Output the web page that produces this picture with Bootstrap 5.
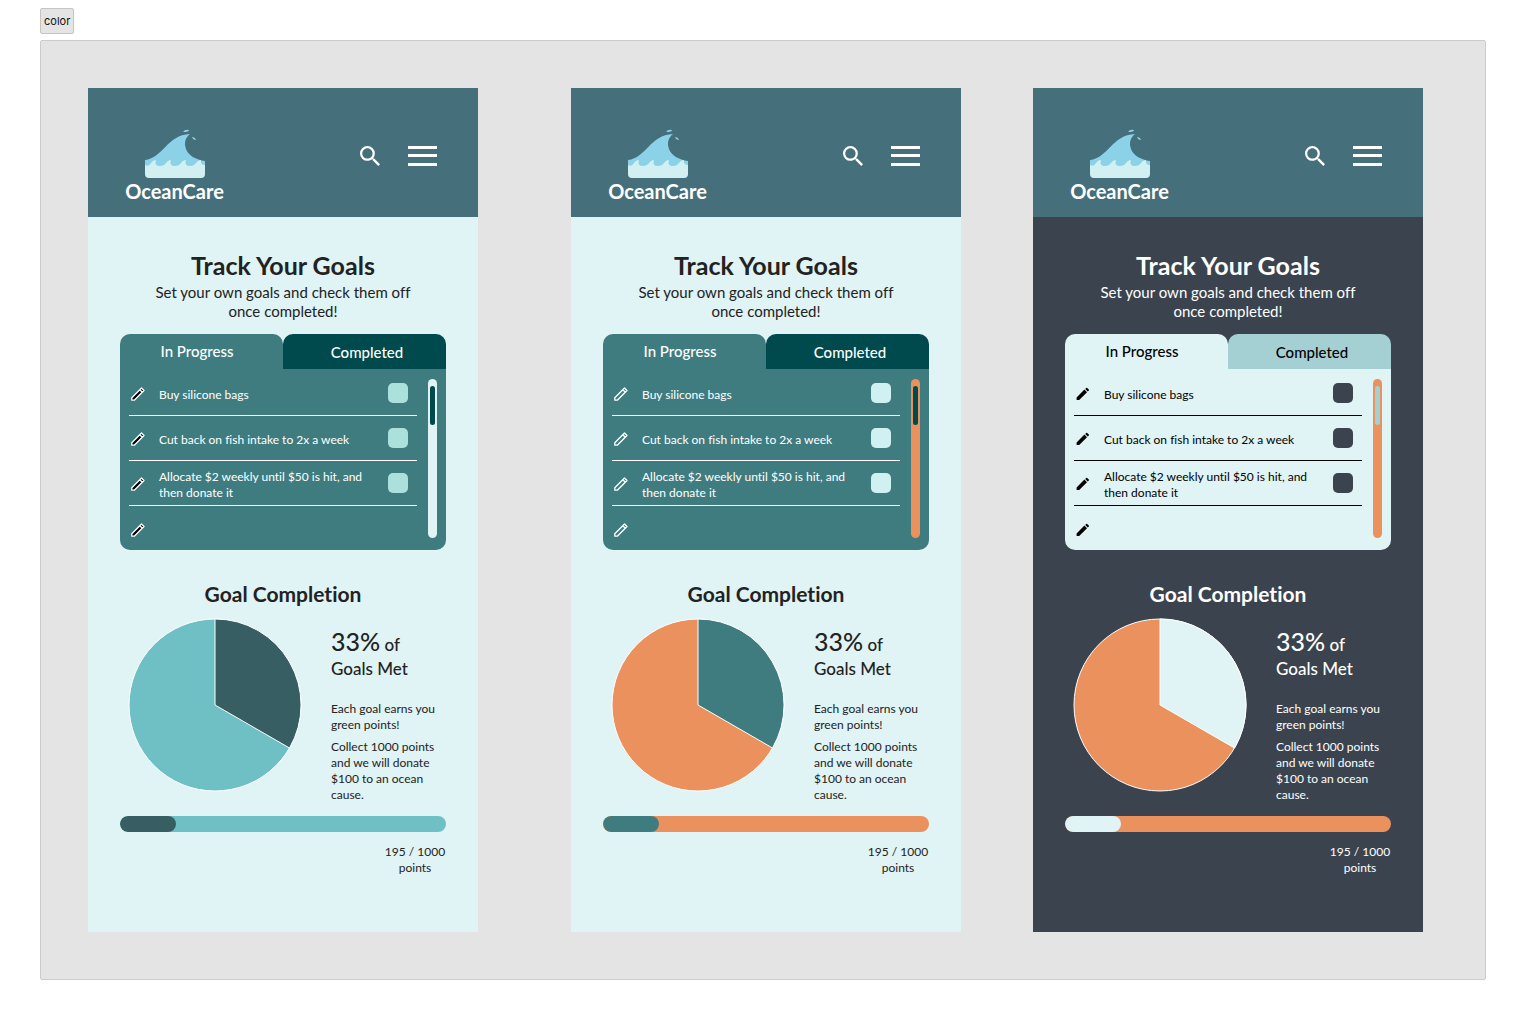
<!DOCTYPE html>
<html lang="en">
<head>
<meta charset="utf-8">
<meta name="viewport" content="width=device-width, initial-scale=1">
<title>OceanCare – color</title>
<link href="https://cdn.jsdelivr.net/npm/bootstrap@5.3.0/dist/css/bootstrap.min.css" rel="stylesheet">
<style>
body{font-family:Lato,"Open Sans",sans-serif;font-variant-ligatures:no-common-ligatures;color:#222;background:#fff;padding:8px 40px 40px}
.chip{font:11px/24px Inter,"Liberation Sans",sans-serif;background:#e4e4e4;border:1px solid #c4c4c4;border-radius:2px;padding:0 3px;color:#111}
.board{background:#e4e4e4;border:1px solid #ccc;border-radius:2px;padding:47px;margin-top:6px;gap:72px}
.phone{width:390px;padding-bottom:56px;background:var(--page);color:var(--ink)}
.phone:first-child{margin-right:21px}
.theme-sea{--page:#e0f3f5;--ink:#222;--panel:#3f7c80;--tab:#00494d;--on:#fff;--check:#abe0dc;--track:#e0f3f5;--thumb:#00494d;--rest:#6fc0c4;--part:#375e62}
.theme-coral{--page:#e0f3f5;--ink:#222;--panel:#3f7c80;--tab:#00494d;--on:#fff;--check:#d0f0f2;--track:#eb915e;--thumb:#00494d;--rest:#eb915e;--part:#3f7c80}
.theme-night{--page:#3b444e;--ink:#fff;--panel:#e0f3f5;--tab:#a4d0d3;--on:#000;--check:#3b444e;--track:#eb915e;--thumb:#a4d0d3;--rest:#eb915e;--part:#e0f3f5}
.top{background:#456f7b;color:#fff;height:129px;padding:41px 41px 0 36px}
.brand{font-size:20px;font-weight:700;line-height:24px;min-width:101px;color:#fff}
.icon-btn{background:none;border:0;padding:0;color:inherit;line-height:0}
.tools{gap:28px;padding-top:17px}
.content{padding:32px 32px 0}
.title{font-size:25px;font-weight:700;line-height:32px;margin:0}
.lede{font-size:15px;line-height:19px;margin:2px 32px 13px}
.panel{background:var(--panel);color:var(--on);border-radius:10px;height:216px}
.tabs{height:35px;background:var(--page)}
.tab-btn{border:0;background:var(--panel);color:var(--on);font-size:15px;font-weight:500;border-radius:10px 10px 0 0;padding:0 9px 0 0}
.tab-btn.rear{background:var(--tab);padding:2px 0 0 5px}
.goals{padding:2px 9px 0;gap:11px}
.goal{height:45px;border-bottom:1px solid var(--on);padding-right:9px}
.goal:last-child{border:0}
.goal .icon-btn{padding-top:2px}
.goal label{font-size:12px;line-height:16px;padding:4px 16px 0 12px}
.goal input{appearance:none;flex:none;width:20px;height:20px;border-radius:5px;background:var(--check);margin:0}
.track{flex:none;width:9px;height:159px;border-radius:5px;background:var(--track);padding:7px 2px;margin-top:8px}
.thumb{height:39px;border-radius:3px;background:var(--thumb)}
.subtitle{font-size:21px;font-weight:700;line-height:28px;margin:30px 0 10px}
.result{gap:29px;padding-left:8px}
.score{font-size:17px;font-weight:500;line-height:24px;margin:9px 0 20px}
.score span{font-size:25px;line-height:28px}
.hint{font-size:12px;line-height:16px;margin:0 0 6px}
.points-bar{height:16px;border-radius:8px;background:var(--rest);margin:7px 0 12px}
.points-bar .progress-bar{background:var(--part);border-radius:8px}
.points{font-size:12px;line-height:16px;width:62px}
</style>
</head>
<body>
<svg width="0" height="0" class="position-absolute" aria-hidden="true">
<symbol id="wave" viewBox="0 0 60 50">
<path fill="#8bd2e9" d="M0 31C18 29 22 6 45 5C40 9 39 14 41 20C43 26 51 31 60 32V40H0Z"/>
<path fill="#8bd2e9" d="M38 3Q40 0 44 1Q44 3 38 3ZM47 8Q50 8 51 11Q48 11 47 8Z"/>
<path fill="#d2f0f1" d="M0 36Q4 38 6 34Q8 31 11 31Q9 37 15 37Q19 37 21 34Q23 31 26 31Q24 37 30 37Q34 37 36 34Q38 31 41 31Q39 37 45 37Q49 37 51 34Q53 31 56 31Q55 36 60 36V45Q60 49 56 49H4Q0 49 0 45Z"/>
</symbol>
<symbol id="find" viewBox="3 3 17.5 17.5"><path fill="currentColor" d="M15.5 14h-.79l-.28-.27A6.47 6.47 0 0 0 16 9.5 6.5 6.5 0 1 0 9.5 16c1.61 0 3.09-.59 4.23-1.57l.27.28v.79l5 4.99L20.49 19l-4.99-5zm-6 0C7.01 14 5 11.99 5 9.5S7.01 5 9.5 5 14 7.01 14 9.5 11.99 14 9.5 14z"/></symbol>
<symbol id="bars" viewBox="0 0 29 20"><path fill="currentColor" d="M0 0h29v3H0zM0 8h29v3H0zM0 17h29v3H0z"/></symbol>
<symbol id="pen-dark" viewBox="0 0 14 14"><path fill="#000" stroke="#fff" stroke-linejoin="round" stroke-width="1.3" d="M.8 13.2V10.7L10.5 1l2.5 2.5L3.3 13.2ZM8.8 2.7l2.5 2.5"/></symbol>
<symbol id="pen-line" viewBox="0 0 14 14"><path fill="none" stroke="#fff" stroke-linejoin="round" stroke-width="1.3" d="M.8 13.2V10.7L10.5 1l2.5 2.5L3.3 13.2ZM8.8 2.7l2.5 2.5"/></symbol>
<symbol id="pen-solid" viewBox="0 0 14 14"><path fill="#000" d="M.6 13V10.400L8.400 2.600l2.600 2.600L3.200 13ZM9.200 1.900l1-1q.5-.4 1 0l1.600 1.600q.4.500 0 1l-1 1Z"/></symbol>
<symbol id="pie" viewBox="0 0 174 174"><circle cx="87" cy="87" r="86" fill="var(--rest)" stroke="#fff"/><path fill="var(--part)" stroke="#fff" d="M87 87V1A86 86 0 0 1 161.500 130Z"/></symbol>
</svg>
<div class="chip d-inline-block align-top">color</div>
<main class="board d-flex">

<section class="phone theme-sea flex-shrink-0">
<header class="top d-flex justify-content-between align-items-start">
<div class="text-center"><svg class="d-block mx-auto" width="60" height="50"><use href="#wave"/></svg><div class="brand">OceanCare</div></div>
<div class="tools d-flex align-items-center"><button class="icon-btn" aria-label="Search"><svg width="20" height="20"><use href="#find"/></svg></button><button class="icon-btn" aria-label="Menu"><svg width="29" height="20"><use href="#bars"/></svg></button></div>
</header>
<div class="content">
<h1 class="title text-center">Track Your Goals</h1>
<p class="lede text-center">Set your own goals and check them off once completed!</p>
<div class="panel">
<div class="tabs d-flex" role="tablist"><button class="tab-btn flex-fill w-50" role="tab" aria-selected="true">In Progress</button><button class="tab-btn rear flex-fill w-50" role="tab" aria-selected="false">Completed</button></div>
<div class="goals d-flex">
<ul class="list-unstyled flex-fill m-0">
<li class="goal d-flex align-items-center"><button class="icon-btn" aria-label="Edit goal"><svg width="18" height="14"><use href="#pen-dark"/></svg></button><label class="flex-fill" for="a1">Buy silicone bags</label><input type="checkbox" id="a1"></li>
<li class="goal d-flex align-items-center"><button class="icon-btn" aria-label="Edit goal"><svg width="18" height="14"><use href="#pen-dark"/></svg></button><label class="flex-fill" for="a2">Cut back on fish intake to 2x a week</label><input type="checkbox" id="a2"></li>
<li class="goal d-flex align-items-center"><button class="icon-btn" aria-label="Edit goal"><svg width="18" height="14"><use href="#pen-dark"/></svg></button><label class="flex-fill" for="a3">Allocate $2 weekly until $50 is hit, and then donate it</label><input type="checkbox" id="a3"></li>
<li class="goal d-flex align-items-center"><button class="icon-btn" aria-label="Add goal"><svg width="18" height="14"><use href="#pen-dark"/></svg></button></li>
</ul>
<div class="track"><div class="thumb"></div></div>
</div>
</div>
<h2 class="subtitle text-center">Goal Completion</h2>
<div class="result d-flex">
<svg class="flex-shrink-0" width="174" height="174" role="img" aria-label="33 percent"><use href="#pie"/></svg>
<div><p class="score"><span>33%</span> of<br>Goals Met</p><p class="hint">Each goal earns you green points!</p><p class="hint">Collect 1000 points and we will donate $100 to an ocean cause.</p></div>
</div>
<div class="progress points-bar"><div class="progress-bar" style="width:17.2%"></div></div>
<p class="points text-center ms-auto mb-0">195 / 1000 points</p>
</div>
</section>

<section class="phone theme-coral flex-shrink-0">
<header class="top d-flex justify-content-between align-items-start">
<div class="text-center"><svg class="d-block mx-auto" width="60" height="50"><use href="#wave"/></svg><div class="brand">OceanCare</div></div>
<div class="tools d-flex align-items-center"><button class="icon-btn" aria-label="Search"><svg width="20" height="20"><use href="#find"/></svg></button><button class="icon-btn" aria-label="Menu"><svg width="29" height="20"><use href="#bars"/></svg></button></div>
</header>
<div class="content">
<h1 class="title text-center">Track Your Goals</h1>
<p class="lede text-center">Set your own goals and check them off once completed!</p>
<div class="panel">
<div class="tabs d-flex" role="tablist"><button class="tab-btn flex-fill w-50" role="tab" aria-selected="true">In Progress</button><button class="tab-btn rear flex-fill w-50" role="tab" aria-selected="false">Completed</button></div>
<div class="goals d-flex">
<ul class="list-unstyled flex-fill m-0">
<li class="goal d-flex align-items-center"><button class="icon-btn" aria-label="Edit goal"><svg width="18" height="14"><use href="#pen-line"/></svg></button><label class="flex-fill" for="b1">Buy silicone bags</label><input type="checkbox" id="b1"></li>
<li class="goal d-flex align-items-center"><button class="icon-btn" aria-label="Edit goal"><svg width="18" height="14"><use href="#pen-line"/></svg></button><label class="flex-fill" for="b2">Cut back on fish intake to 2x a week</label><input type="checkbox" id="b2"></li>
<li class="goal d-flex align-items-center"><button class="icon-btn" aria-label="Edit goal"><svg width="18" height="14"><use href="#pen-line"/></svg></button><label class="flex-fill" for="b3">Allocate $2 weekly until $50 is hit, and then donate it</label><input type="checkbox" id="b3"></li>
<li class="goal d-flex align-items-center"><button class="icon-btn" aria-label="Add goal"><svg width="18" height="14"><use href="#pen-line"/></svg></button></li>
</ul>
<div class="track"><div class="thumb"></div></div>
</div>
</div>
<h2 class="subtitle text-center">Goal Completion</h2>
<div class="result d-flex">
<svg class="flex-shrink-0" width="174" height="174" role="img" aria-label="33 percent"><use href="#pie"/></svg>
<div><p class="score"><span>33%</span> of<br>Goals Met</p><p class="hint">Each goal earns you green points!</p><p class="hint">Collect 1000 points and we will donate $100 to an ocean cause.</p></div>
</div>
<div class="progress points-bar"><div class="progress-bar" style="width:17.2%"></div></div>
<p class="points text-center ms-auto mb-0">195 / 1000 points</p>
</div>
</section>

<section class="phone theme-night flex-shrink-0">
<header class="top d-flex justify-content-between align-items-start">
<div class="text-center"><svg class="d-block mx-auto" width="60" height="50"><use href="#wave"/></svg><div class="brand">OceanCare</div></div>
<div class="tools d-flex align-items-center"><button class="icon-btn" aria-label="Search"><svg width="20" height="20"><use href="#find"/></svg></button><button class="icon-btn" aria-label="Menu"><svg width="29" height="20"><use href="#bars"/></svg></button></div>
</header>
<div class="content">
<h1 class="title text-center">Track Your Goals</h1>
<p class="lede text-center">Set your own goals and check them off once completed!</p>
<div class="panel">
<div class="tabs d-flex" role="tablist"><button class="tab-btn flex-fill w-50" role="tab" aria-selected="true">In Progress</button><button class="tab-btn rear flex-fill w-50" role="tab" aria-selected="false">Completed</button></div>
<div class="goals d-flex">
<ul class="list-unstyled flex-fill m-0">
<li class="goal d-flex align-items-center"><button class="icon-btn" aria-label="Edit goal"><svg width="18" height="14"><use href="#pen-solid"/></svg></button><label class="flex-fill" for="c1">Buy silicone bags</label><input type="checkbox" id="c1"></li>
<li class="goal d-flex align-items-center"><button class="icon-btn" aria-label="Edit goal"><svg width="18" height="14"><use href="#pen-solid"/></svg></button><label class="flex-fill" for="c2">Cut back on fish intake to 2x a week</label><input type="checkbox" id="c2"></li>
<li class="goal d-flex align-items-center"><button class="icon-btn" aria-label="Edit goal"><svg width="18" height="14"><use href="#pen-solid"/></svg></button><label class="flex-fill" for="c3">Allocate $2 weekly until $50 is hit, and then donate it</label><input type="checkbox" id="c3"></li>
<li class="goal d-flex align-items-center"><button class="icon-btn" aria-label="Add goal"><svg width="18" height="14"><use href="#pen-solid"/></svg></button></li>
</ul>
<div class="track"><div class="thumb"></div></div>
</div>
</div>
<h2 class="subtitle text-center">Goal Completion</h2>
<div class="result d-flex">
<svg class="flex-shrink-0" width="174" height="174" role="img" aria-label="33 percent"><use href="#pie"/></svg>
<div><p class="score"><span>33%</span> of<br>Goals Met</p><p class="hint">Each goal earns you green points!</p><p class="hint">Collect 1000 points and we will donate $100 to an ocean cause.</p></div>
</div>
<div class="progress points-bar"><div class="progress-bar" style="width:17.2%"></div></div>
<p class="points text-center ms-auto mb-0">195 / 1000 points</p>
</div>
</section>
</main>
<script src="https://cdn.jsdelivr.net/npm/bootstrap@5.3.0/dist/js/bootstrap.bundle.min.js"></script>
</body>
</html>
